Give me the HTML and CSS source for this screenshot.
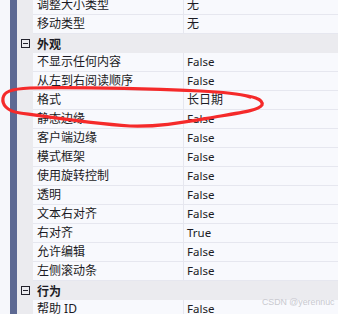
FILE: index.html
```html
<!DOCTYPE html>
<html lang="zh-CN">
<head>
  <meta charset="UTF-8">
  <title>属性</title>
  <link rel="stylesheet" href="styles.css">
</head>
<body>

  <div class="panel">
    <div class="edge"></div>
    <div class="bar"></div>
    <div class="grid">
      <div class="row"><div class="gutter"></div><div class="name">调整大小类型</div><div class="value">无</div></div>
      <div class="row"><div class="gutter"></div><div class="name">移动类型</div><div class="value">无</div></div>
      <div class="cat"><span class="toggle"></span><span class="cat-name">外观</span></div>
      <div class="row"><div class="gutter"></div><div class="name">不显示任何内容</div><div class="value en">False</div></div>
      <div class="row"><div class="gutter"></div><div class="name">从左到右阅读顺序</div><div class="value en">False</div></div>
      <div class="row"><div class="gutter"></div><div class="name">格式</div><div class="value">长日期</div></div>
      <div class="row"><div class="gutter"></div><div class="name">静态边缘</div><div class="value en">False</div></div>
      <div class="row"><div class="gutter"></div><div class="name">客户端边缘</div><div class="value en">False</div></div>
      <div class="row"><div class="gutter"></div><div class="name">模式框架</div><div class="value en">False</div></div>
      <div class="row"><div class="gutter"></div><div class="name">使用旋转控制</div><div class="value en">False</div></div>
      <div class="row"><div class="gutter"></div><div class="name">透明</div><div class="value en">False</div></div>
      <div class="row"><div class="gutter"></div><div class="name">文本右对齐</div><div class="value en">False</div></div>
      <div class="row"><div class="gutter"></div><div class="name">右对齐</div><div class="value en">True</div></div>
      <div class="row"><div class="gutter"></div><div class="name">允许编辑</div><div class="value en">False</div></div>
      <div class="row"><div class="gutter"></div><div class="name">左侧滚动条</div><div class="value en">False</div></div>
      <div class="cat"><span class="toggle"></span><span class="cat-name">行为</span></div>
      <div class="row"><div class="gutter"></div><div class="name">帮助 ID</div><div class="value en">False</div></div>
    </div>
  </div>

  <!-- hand drawn mark over the grid -->
  <svg class="scribble" width="338" height="314" viewBox="0 0 338 314">
    <path d="M 236 94 C 252 96, 264 99, 262 105 C 259 110, 245 112, 215 117 C 185 122, 160 127, 130 126 C 95 124, 55 118, 20 113 C 6 111, 2 104, 3 98 C 4 92, 10 89, 30 88 C 80 87, 150 89, 200 91 C 225 92, 240 94, 250 97"
      fill="none" stroke="#f52a2a" stroke-width="3.2" stroke-linecap="round" stroke-linejoin="round"/>
  </svg>

  <div class="watermark">CSDN @yerennuc</div>

</body>
</html>
```

FILE: styles.css
```css
body {
  margin: 0;
  width: 338px;
  height: 314px;
  overflow: hidden;
  position: relative;
  font-family: "Noto Sans", "Noto Sans CJK SC", sans-serif;
  font-size: 12px;
  color: #1b1b24;
  background-color: #f8f9fc;
}

.panel {
  display: flex;
  height: 100%;
}

.edge {
  width: 10px;
  background-color: #f6f7fb;
}

.bar {
  width: 7px;
  background-color: #5d6993;
}

.grid {
  flex: 1;
  margin-top: -4px;
  background-color: #ebebef;
}

.row {
  display: flex;
  height: 18px;
  border-bottom: 1px solid #e6e7ef;
  line-height: 18px;
}

.gutter {
  width: 16px;
  background-color: #ebebef;
  border-bottom: 1px solid #ebebef;
  margin-bottom: -1px;
}

.name {
  width: 146px;
  padding-left: 4px;
  background-color: #f8f9fd;
  border-right: 1px solid #e6e7ef;
  white-space: nowrap;
  overflow: hidden;
}

.value {
  flex: 1;
  padding-left: 3px;
  background-color: #f8f9fd;
  white-space: nowrap;
}

.value.en {
  font-size: 11.5px;
}

.cat {
  display: flex;
  align-items: center;
  height: 19px;
  background-color: #ebebef;
}

.toggle {
  position: relative;
  width: 7px;
  height: 7px;
  margin-left: 4px;
  border: 1px solid #22222c;
}

.toggle::after {
  content: "";
  position: absolute;
  left: 1px;
  right: 1px;
  top: 3px;
  height: 1px;
  background-color: #22222c;
}

.cat-name {
  margin-left: 7px;
  font-weight: bold;
}

.scribble {
  position: absolute;
  top: 0;
  left: 0;
  pointer-events: none;
}

.watermark {
  position: absolute;
  left: 262px;
  top: 297px;
  font-family: "Liberation Sans", sans-serif;
  font-size: 8.8px;
  color: #c9c9cf;
  white-space: nowrap;
}
```
